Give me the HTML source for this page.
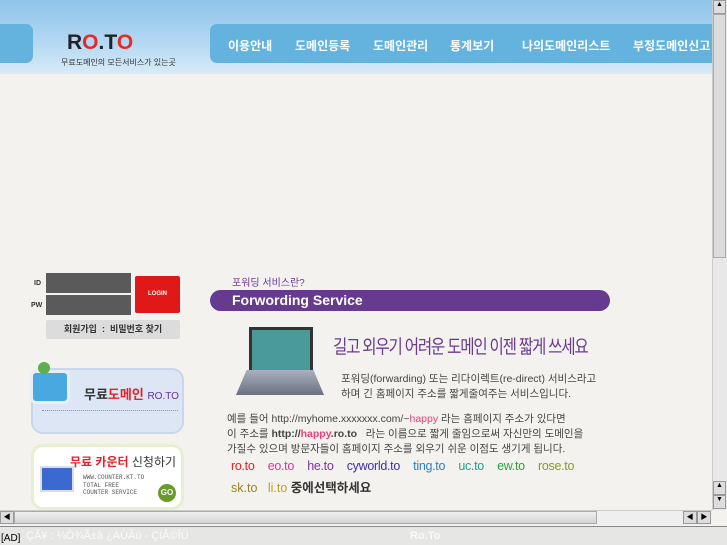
<!DOCTYPE html>
<html><head><meta charset="utf-8"><style>
body{margin:0;width:727px;height:545px;overflow:hidden;background:#f3f2ef;font-family:"Liberation Sans","Noto Sans CJK KR",sans-serif;position:relative}
.a{position:absolute}
.hdr{left:0;top:0;width:712px;height:74px;background:linear-gradient(180deg,#8fc3ea 0%,#b5d9f3 60%,#d8ebf8 100%)}
.nav{left:210px;top:24px;width:502px;height:39px;background:#64b3df;border-radius:7px 0 0 7px;color:#fff;font-size:12px;font-weight:bold;white-space:nowrap;overflow:hidden}
.nav span{position:absolute;top:13px}
</style></head><body>
<div class="a hdr"></div>
<div class="a" style="left:0;top:24px;width:33px;height:39px;background:#64b3df;border-radius:0 7px 7px 0"></div>
<div class="a" style="left:67px;top:31px;font-size:21px;font-weight:900;letter-spacing:0px;color:#222">R<span style="color:#e62a2a">O</span>.T<span style="color:#e62a2a">O</span></div>
<div class="a" style="left:61px;top:57px;font-size:8px;color:#333;white-space:nowrap">무료도메인의 모든서비스가 있는곳</div>
<div class="a nav"><span style="left:18px">이용안내</span><span style="left:85px">도메인등록</span><span style="left:163px">도메인관리</span><span style="left:240px">통계보기</span><span style="left:312px">나의도메인리스트</span><span style="left:423px">부정도메인신고</span></div>

<div class="a" style="left:34px;top:280px;font-size:7px;color:#333;font-weight:bold">ID</div>
<div class="a" style="left:31px;top:302px;font-size:7px;color:#333;font-weight:bold">PW</div>
<div class="a" style="left:46px;top:273px;width:85px;height:20px;background:#5a5a5a"></div>
<div class="a" style="left:46px;top:295px;width:85px;height:20px;background:#5a5a5a"></div>
<div class="a" style="left:135px;top:276px;width:45px;height:37px;background:#e01818;border-radius:2px;color:#fff;font-size:6px;font-weight:bold;text-align:center;line-height:37px">LOGIN</div>
<div class="a" style="left:46px;top:320px;width:134px;height:19px;background:#dcdcdc;border-radius:2px;font-size:9px;font-weight:bold;color:#333;line-height:19px;text-align:center">회원가입 &nbsp;:&nbsp; 비밀번호 찾기</div>

<div class="a" style="left:31px;top:368px;width:153px;height:66px;background:#dde6f5;border:2px solid #c8d6ee;border-radius:12px;box-sizing:border-box"></div>
<div class="a" style="left:30px;top:370px;width:34px;height:28px;background:#4aa8e0;border:3px solid #e8eef5;border-radius:6px"></div>
<div class="a" style="left:38px;top:362px;width:12px;height:12px;background:#5ab04a;border-radius:50%"></div>
<div class="a" style="left:84px;top:384px;font-size:13px;font-weight:bold;color:#333;white-space:nowrap">무료<span style="color:#e0242a">도메인</span> <span style="color:#6a2a9a;font-size:10px;font-weight:normal">RO.TO</span></div>
<div class="a" style="left:42px;top:410px;width:136px;border-top:1px dotted #8890c0"></div>

<div class="a" style="left:31px;top:444px;width:153px;height:66px;background:#fff;border:3px solid #e8efcf;border-radius:12px;box-sizing:border-box"></div>
<div class="a" style="left:40px;top:466px;width:30px;height:22px;background:#3a6ad0;border:2px solid #ddd"></div>
<div class="a" style="left:70px;top:453px;font-size:12px;font-weight:bold;color:#e0242a;white-space:nowrap">무료 카운터 <span style="color:#333;font-weight:normal">신청하기</span></div>
<div class="a" style="left:83px;top:474px;font-size:6px;color:#555;line-height:7.5px;font-family:'Liberation Mono',monospace">WWW.COUNTER.KT.TO<br>TOTAL FREE<br>COUNTER SERVICE</div>
<div class="a" style="left:158px;top:484px;width:18px;height:18px;border-radius:50%;background:#6a9a2a;color:#fff;font-size:8px;font-weight:bold;text-align:center;line-height:18px">GO</div>

<div class="a" style="left:232px;top:274px;font-size:10px;color:#6a3a90">포워딩 서비스란?</div>
<div class="a" style="left:210px;top:290px;width:400px;height:21px;background:#663a8e;border-radius:11px;color:#fff;font-size:14px;font-weight:bold;line-height:21px;text-indent:22px">Forwording Service</div>
<div class="a" style="left:249px;top:327px;width:58px;height:40px;background:#4a9a9a;border:3px solid #333"></div>
<div class="a" style="left:236px;top:370px;width:88px;height:25px;background:linear-gradient(#aab0c0,#6a7080);clip-path:polygon(12% 0,88% 0,100% 100%,0 100%)"></div>
<div class="a" style="left:333px;top:332px;font-size:19px;color:#6a3a90;letter-spacing:-1.5px;white-space:nowrap;transform:scaleX(0.82);transform-origin:left top">길고 외우기 어려운 도메인 이젠 짧게 쓰세요</div>
<div class="a" style="left:341px;top:372px;font-size:10.5px;color:#444;line-height:15px;white-space:nowrap">포워딩(forwarding) 또는 리다이렉트(re-direct) 서비스라고<br>하며 긴 홈페이지 주소를 짧게줄여주는 서비스입니다.</div>
<div class="a" style="left:227px;top:412px;font-size:10.5px;color:#444;line-height:15px;white-space:nowrap">예를 들어 http://myhome.xxxxxxx.com/~<span style="color:#e8407a">happy</span> 라는 홈페이지 주소가 있다면<br>이 주소를 <b>http://<span style="color:#e8407a">happy</span>.ro.to</b> &nbsp; 라는 이름으로 짧게 줄임으로써 자신만의 도메인을<br>가질수 있으며 방문자들이 홈페이지 주소를 외우기 쉬운 이점도 생기게 됩니다.</div>
<div class="a" style="left:231px;top:459px;font-size:12.5px;word-spacing:10px;white-space:nowrap;letter-spacing:-0.3px"><span style="color:#e02020">ro.to</span> <span style="color:#e030a0">eo.to</span> <span style="color:#8030b0">he.to</span> <span style="color:#4030b0">cyworld.to</span> <span style="color:#3080c0">ting.to</span> <span style="color:#20a090">uc.to</span> <span style="color:#30a040">ew.to</span> <span style="color:#80a020">rose.to</span></div>
<div class="a" style="left:231px;top:477px;font-size:12.5px;white-space:nowrap"><span style="color:#a08020">sk.to</span> &nbsp; <span style="color:#c0a020">li.to</span> <span style="color:#333;font-weight:bold">중에선택하세요</span></div>

<div class="a" style="left:712px;top:0;width:15px;height:510px;background:#e8e8e8;border-left:1px solid #ccc;box-sizing:border-box"></div>
<div class="a" style="left:713px;top:0;width:13px;height:14px;background:#ddd;border:1px solid #999;box-sizing:border-box;font-size:7px;text-align:center">▲</div>
<div class="a" style="left:713px;top:14px;width:13px;height:244px;background:#dcdcdc;border:1px solid #aaa;box-sizing:border-box"></div>
<div class="a" style="left:713px;top:481px;width:13px;height:14px;background:#ddd;border:1px solid #999;box-sizing:border-box;font-size:7px;text-align:center">▲</div>
<div class="a" style="left:713px;top:495px;width:13px;height:14px;background:#ddd;border:1px solid #999;box-sizing:border-box;font-size:7px;text-align:center">▼</div>
<div class="a" style="left:0;top:510px;width:712px;height:15px;background:#efefef;border-top:1px solid #ccc;box-sizing:border-box"></div>
<div class="a" style="left:0;top:511px;width:14px;height:13px;background:#ddd;border:1px solid #999;box-sizing:border-box;font-size:7px;text-align:center">◀</div>
<div class="a" style="left:14px;top:511px;width:583px;height:13px;background:linear-gradient(#f0f0f0,#d4d4d4);border:1px solid #aaa;box-sizing:border-box"></div>
<div class="a" style="left:683px;top:511px;width:14px;height:13px;background:#ddd;border:1px solid #999;box-sizing:border-box;font-size:7px;text-align:center">◀</div>
<div class="a" style="left:697px;top:511px;width:14px;height:13px;background:#ddd;border:1px solid #999;box-sizing:border-box;font-size:7px;text-align:center">▶</div>
<div class="a" style="left:0;top:526px;width:727px;height:19px;background:#e6e6e4;border-top:1px solid #888;box-sizing:border-box"></div>
<div class="a" style="left:1px;top:533px;font-size:10px;color:#000">[AD]</div>
<div class="a" style="left:26px;top:530px;font-size:11px;color:#fafafa;white-space:nowrap">ÇÃ¥ : ¼Ò¾Ã±â ¿ÀÙÂü - ÇIÂ©ÎÜ</div>
<div class="a" style="left:410px;top:530px;font-size:11px;color:#fafafa;font-weight:bold">Ro.To</div>
</body></html>
